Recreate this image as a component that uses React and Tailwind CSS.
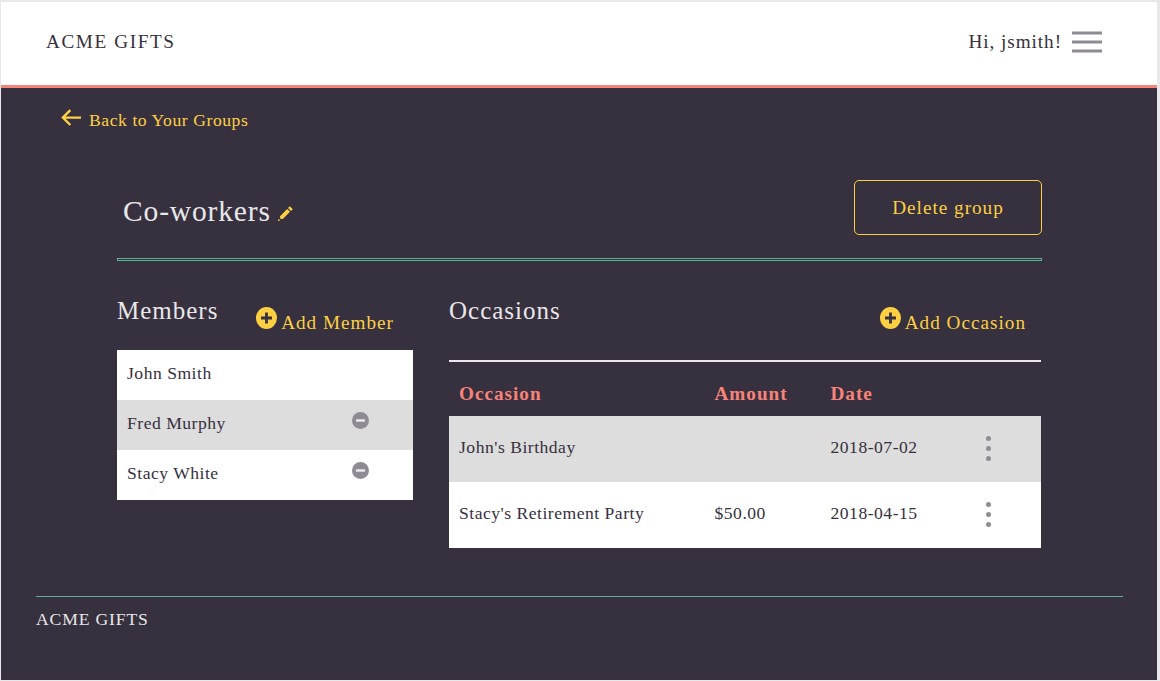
const members = [
  { name: "John Smith", removable: false },
  { name: "Fred Murphy", removable: true },
  { name: "Stacy White", removable: true },
];

const occasions = [
  { title: "John's Birthday", amount: "", date: "2018-07-02" },
  { title: "Stacy's Retirement Party", amount: "$50.00", date: "2018-04-15" },
];

function MenuIcon() {
  return (
    <svg className="block" width="30" height="22" viewBox="0 0 30 22" stroke="#8f8b94" strokeWidth="3">
      <path d="M0 2H30M0 11H30M0 20H30" />
    </svg>
  );
}

function ArrowIcon() {
  return (
    <svg className="block" width="20" height="18" viewBox="0 0 20 18" fill="none" stroke="#fdd043" strokeWidth="2.4">
      <path d="M9.3 1.2L1.9 8.6L9.3 16M1.9 8.6H20" />
    </svg>
  );
}

function PencilIcon() {
  return (
    <svg className="block" width="15" height="15" viewBox="0 0 15 15" fill="#fdd043">
      <path d="M0 15L0.6 12.7L2.3 14.4ZM2 10.2L9.2 3L12 5.8L4.8 13L2.2 12.8ZM10 2L11.8 0.2L14.8 3.2L13 5Z" />
    </svg>
  );
}

function PlusIcon() {
  return (
    <svg className="block" width="21" height="22" viewBox="0 0 21 22">
      <ellipse cx="10.5" cy="11" rx="10.5" ry="11" fill="#fdd043" />
      <path d="M10.5 5.5V16.5M5 11H16" stroke="#37303e" strokeWidth="2.8" />
    </svg>
  );
}

function MinusIcon() {
  return (
    <svg className="block" width="17" height="17" viewBox="0 0 17 17">
      <circle cx="8.5" cy="8.5" r="8.5" fill="#8f8b94" />
      <path d="M4 8.5H13" stroke="#ececec" strokeWidth="2.4" />
    </svg>
  );
}

function DotsIcon() {
  return (
    <svg className="block" width="5" height="25" viewBox="0 0 5 25" fill="#8f8c92">
      <circle cx="2.5" cy="2.5" r="2.5" />
      <circle cx="2.5" cy="12.5" r="2.5" />
      <circle cx="2.5" cy="22.5" r="2.5" />
    </svg>
  );
}

function AddLink({ children }) {
  return (
    <a className="flex items-start gap-1 text-[19.2px] leading-[22px] tracking-[1px] text-[#fdd043]">
      <PlusIcon />
      <span className="pt-[5px]">{children}</span>
    </a>
  );
}

export default function App() {
  return (
    <div className="h-[681px] w-[1160px] bg-[#e8e8e8] pt-0.5 pr-[3px] pb-px pl-px font-['Liberation_Serif',serif]">
      <div className="flex h-full flex-col bg-[#37303e] text-[17.6px] tracking-[0.5px] text-[#37303e]">
        <header className="flex h-[86px] shrink-0 items-center justify-between border-b-[3px] border-[#f88379] bg-white pr-[55px] pb-[3px] pl-[45px]">
          <span className="text-[19.2px] tracking-[1.6px]">ACME GIFTS</span>
          <div className="flex items-center gap-2.5">
            <span className="text-[19.2px] tracking-[0.95px]">Hi, jsmith!</span>
            <MenuIcon />
          </div>
        </header>

        <a className="flex h-16 shrink-0 items-center gap-2 pl-[60px] text-[#fdd043]">
          <span className="pb-1"><ArrowIcon /></span>
          <span className="tracking-[0.57px]">Back to Your Groups</span>
        </a>

        <main className="ml-[116px] w-[925px] shrink-0 pt-7">
          <div className="flex h-[55px] items-center justify-between">
            <h1 className="flex items-center gap-[7px] pt-[7px] pl-1.5 text-[29.5px] leading-9 tracking-[0.85px] text-[#e8e8e8]">
              Co-workers
              <span className="pt-1"><PencilIcon /></span>
            </h1>
            <button className="h-full w-[188px] rounded-[5px] border border-[#fdd043] pt-px text-[19.2px] tracking-[1px] text-[#fdd043]">
              Delete group
            </button>
          </div>

          <div className="mt-[23px] h-[3px] border border-[#59b390]" />

          <div className="flex gap-9">
            <section className="w-[296px]">
              <div className="flex h-[89px] items-start justify-between pr-[19px]">
                <h2 className="pt-[34px] text-[25px] leading-8 tracking-[1px] text-[#e8e8e8]">Members</h2>
                <div className="pt-[46px]"><AddLink>Add Member</AddLink></div>
              </div>
              <ul>
                {members.map((m) => (
                  <li key={m.name} className="flex h-[50px] items-center justify-between bg-white pr-[44px] pb-1 pl-2.5 even:bg-[#dddddd]">
                    <span>{m.name}</span>
                    {m.removable && <span className="pb-[5px]"><MinusIcon /></span>}
                  </li>
                ))}
              </ul>
            </section>

            <section className="w-[592px]">
              <div className="flex h-[101px] items-start justify-between border-b-2 border-[#e8e8e8] pr-[15px]">
                <h2 className="pt-[34px] text-[25px] leading-8 tracking-[1px] text-[#e8e8e8]">Occasions</h2>
                <div className="pt-[46px]"><AddLink>Add Occasion</AddLink></div>
              </div>
              <div className="grid h-[54px] grid-cols-[255.5px_116px_1fr] items-center pt-2.5 pl-2.5 text-[19.2px] font-bold tracking-[1px] text-[#f88379]">
                <span>Occasion</span>
                <span>Amount</span>
                <span>Date</span>
              </div>
              {occasions.map((o) => (
                <div key={o.title} className="grid h-[66px] grid-cols-[255.5px_116px_155.5px_1fr] items-center bg-[#dddddd] pl-2.5 last:bg-white">
                  <span className="pb-1">{o.title}</span>
                  <span className="pb-1">{o.amount}</span>
                  <span className="pb-1">{o.date}</span>
                  <span className="pb-0.5"><DotsIcon /></span>
                </div>
              ))}
            </section>
          </div>
        </main>

        <footer className="mt-12 mr-[34px] ml-[35px] border-t border-[#59b390] pt-[9px] tracking-[0.85px] text-[#e8e8e8]">
          ACME GIFTS
        </footer>
      </div>
    </div>
  );
}
